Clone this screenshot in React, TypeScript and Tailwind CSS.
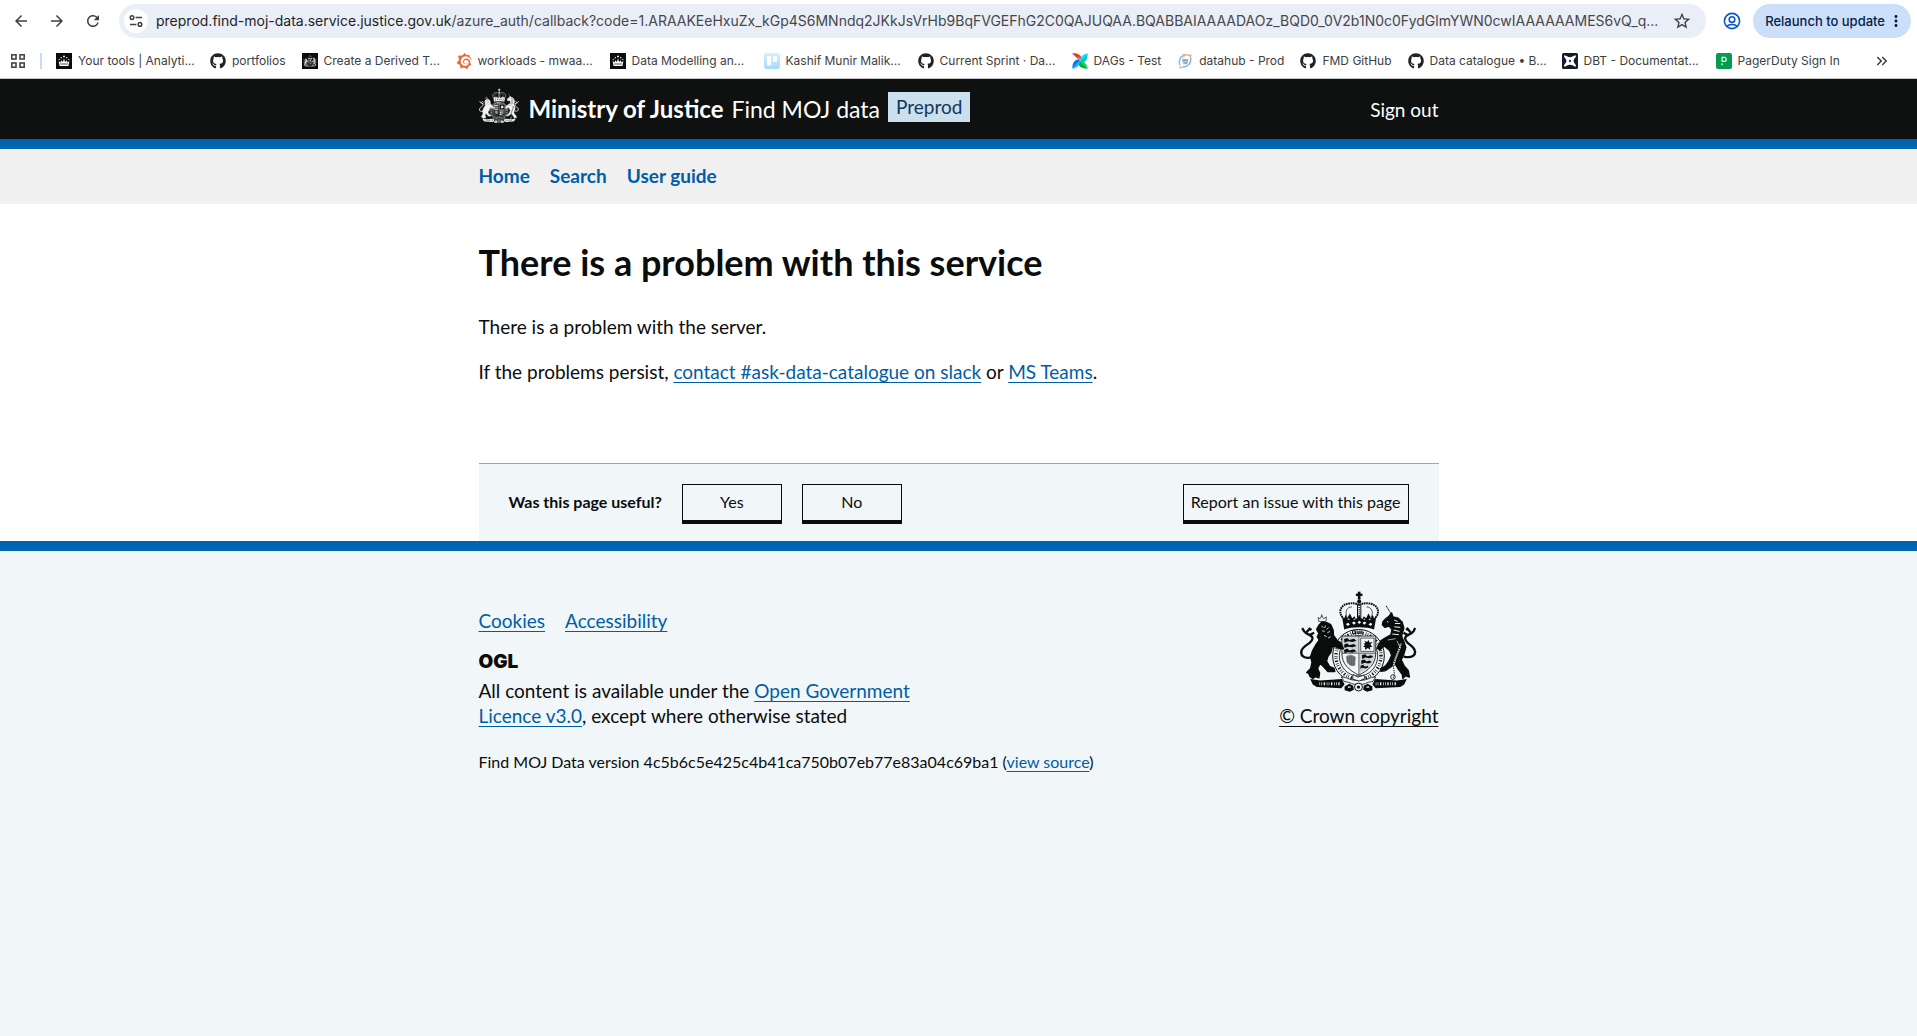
import React from "react";
import { FaGithub } from "react-icons/fa";
import { SiGrafana } from "react-icons/si";
import {
  MdArrowBack,
  MdArrowForward,
  MdRefresh,
  MdStarBorder,
  MdMoreVert,
  MdKeyboardDoubleArrowRight,
} from "react-icons/md";

const LION =
  "M66 112 L74 104 L88 106 L100 112 L107 128 L108 144 L118 158 L132 170 L138 184 L126 183 L110 176 L104 180 L100 196 L91 208 L87 222 L96 238 L110 244 L112 253 L92 253 L78 238 L68 228 L60 244 L66 258 L64 272 L54 268 L46 274 L38 268 L34 258 L28 256 L40 244 L44 226 L40 208 L46 190 L56 172 L66 158 L60 148 L65 138 L58 126 Z";
const UNICORN =
  "M258 102 L268 92 L276 86 L284 76 L288 88 L304 92 L316 104 L321 122 L314 146 L320 160 L327 180 L320 204 L313 218 L322 236 L334 250 L338 270 L326 266 L318 274 L316 262 L304 246 L296 232 L284 238 L266 250 L252 253 L250 246 L266 236 L276 222 L284 204 L278 190 L262 176 L248 188 L240 182 L252 160 L268 150 L282 142 L285 126 L276 116 L264 120 L256 112 Z";
const LION_TAIL =
  "M44 210 C20 216 8 206 12 190 C16 174 46 168 45 152 C44 140 28 144 20 132 L14 122 M24 138 L36 124 L42 128 M34 144 L50 136";
const UNICORN_TAIL =
  "M320 208 C346 214 358 204 354 190 C350 174 324 168 325 152 C326 140 342 144 350 132 L355 122 M344 138 L332 124 L328 128 M334 144 L320 136";

function RoyalArms({ ink, paper, className }: { ink: string; paper: string; className: string }) {
  return (
    <svg viewBox="8 10 352 308" className={className} aria-hidden="true" fill={ink}>
      {/* garter and shield */}
      <ellipse cx="184" cy="206" rx="78" ry="80" fill={paper} stroke={ink} strokeWidth="3" />
      <ellipse cx="184" cy="206" rx="68" ry="70" fill="none" stroke={ink} strokeWidth="10" strokeDasharray="2 4 2 5 4 6" />
      <ellipse cx="184" cy="206" rx="58" ry="61" fill={paper} stroke={ink} strokeWidth="2.5" />
      <path d="M134 146 H236 V200 C236 230 214 250 185 264 C156 250 134 230 134 200 Z" fill={paper} stroke={ink} strokeWidth="2.5" />
      <path d="M136 148 H184 V197 H136 Z M185 199 H234 C234 228 214 246 185 260 Z" opacity="0.15" />
      <path d="M140 156 l10 -4 l6 6 l14 -4 l8 6 l-12 4 l-14 -2 l-10 4 Z M140 172 l10 -4 l6 6 l14 -4 l8 6 l-12 4 l-14 -2 l-10 4 Z M140 188 l10 -4 l6 6 l14 -4 l8 6 l-12 4 l-14 -2 l-10 4 Z" />
      <path d="M194 204 l10 -3 l6 6 l12 -3 l7 5 l-12 4 l-12 -2 l-10 4 Z M192 220 l10 -3 l6 6 l10 -3 l6 5 l-10 4 l-12 -2 l-9 4 Z M190 236 l8 -3 l6 6 l8 -3 l2 5 l-8 3 l-12 -2 l-4 4 Z" />
      <rect x="191" y="152" width="40" height="40" fill={paper} stroke={ink} strokeWidth="2" />
      <path d="M202 160 l8 4 l4 -6 l4 8 l8 -2 l-6 8 l6 6 l-8 2 l2 8 l-8 -6 l-8 6 l0 -8 l-6 -2 l6 -5 l-5 -4 l6 -2 Z" />
      <path d="M146 208 C154 200 168 200 176 210 L174 234 C166 240 156 236 148 224 Z" opacity="0.45" />
      <path d="M152 208 V228 M158 206 V234 M164 206 V236 M170 208 V236" stroke={ink} strokeWidth="1.5" />
      <path d="M185 146 V264 M134 198 H236" stroke={ink} strokeWidth="4" opacity="0.45" />
      {/* crown */}
      <rect x="182" y="12" width="8" height="24" />
      <rect x="176" y="18" width="20" height="7" />
      <circle cx="186" cy="42" r="6" />
      <path
        d="M136 90 C120 70 134 50 154 48 C168 46 180 48 186 52 C192 48 204 46 218 48 C238 50 252 70 236 90"
        fill="none"
        stroke={ink}
        strokeWidth="6"
        strokeDasharray="5 2"
      />
      <path d="M150 90 C142 74 148 58 164 58 M222 90 C230 74 224 58 208 58" fill="none" stroke={ink} strokeWidth="2" />
      <path d="M181 50 V92 M191 50 V92" stroke={ink} strokeWidth="3" />
      <path d="M186 52 V92" stroke={ink} strokeWidth="4" strokeDasharray="3 3" />
      <path d="M134 86 l7 6 l4 -10 l5 10 l8 -14 l7 14 l7 -6 l3 8 l6 -2 l5 -10 l5 10 l6 2 l3 -8 l7 6 l7 -14 l8 14 l5 -10 l4 10 l7 -6 L231 126 C210 117 162 117 141 126 Z" />
      <path
        d="M146 110 l7 -4 l5 5 l-7 5 Z M164 106 l7 -4 l5 5 l-6 5 Z M181 104 l5 -4 l6 4 l-6 6 Z M196 107 l6 -5 l6 4 l-6 6 Z M214 111 l6 -5 l6 4 l-5 6 Z M150 96 l4 -4 l4 5 Z M168 96 l4 -3 l3 4 Z M198 96 l4 -3 l3 4 Z M214 97 l4 -4 l4 4 Z"
        fill={paper}
      />
      <path d="M166 130 h8 v9 h-8 Z M180 129 v9 h8 v-9 M194 129 v11" fill="none" stroke={ink} strokeWidth="3" />
      {/* lion */}
      <path d="M64 102 L62 90 L68 94 L73 84 L79 94 L87 88 L86 102 Z M73 80 v8" fill="none" stroke={ink} strokeWidth="2" />
      <path d={LION} stroke={ink} strokeWidth="5" strokeLinejoin="round" />
      <path d={LION_TAIL} fill="none" stroke={ink} strokeWidth="7" />
      <path d="M72 116 l6 4 M84 114 l-2 8 M94 120 l-6 6 M74 130 l8 2 M90 136 l8 -4 M80 144 l8 4 M100 148 l-8 4" stroke={paper} strokeWidth="2.5" />
      {/* unicorn */}
      <path d="M283 80 L267 54" stroke={ink} strokeWidth="3" strokeDasharray="4 1" />
      <path d={UNICORN} stroke={ink} strokeWidth="4" strokeLinejoin="round" />
      <path d={UNICORN_TAIL} fill="none" stroke={ink} strokeWidth="7" />
      <path d="M292 98 l10 4 M294 108 l16 0 M292 118 l18 2 M290 128 l18 4 M286 140 l20 2 M270 102 l4 2" stroke={paper} strokeWidth="3" />
      <path d="M272 158 l24 -4 M300 160 l10 22" stroke={paper} strokeWidth="2" />
      <path d="M312 168 C306 200 290 214 290 240 C290 252 296 262 288 274" fill="none" stroke={paper} strokeWidth="5" />
      <path d="M312 168 C306 200 290 214 290 240 C290 252 296 262 288 274" fill="none" stroke={ink} strokeWidth="3" strokeDasharray="4 3" />
      <circle cx="288" cy="270" r="7" fill="none" stroke={ink} strokeWidth="2.5" />
      {/* scroll */}
      <path d="M38 276 L68 280 L134 276 L142 292 L132 304 L58 300 L46 292 Z M330 276 L300 280 L234 276 L226 292 L236 304 L310 300 L322 292 Z" />
      <path d="M66 290 L132 290 M236 290 L302 290" stroke={paper} strokeWidth="9" strokeDasharray="2 4 2 5 4 5" />
      <path d="M132 270 C150 268 160 284 184 278 C208 284 218 268 236 270 L226 284 C206 284 204 296 184 290 C164 296 162 284 142 284 Z" fill={paper} stroke={ink} strokeWidth="2.5" />
      <path d="M168 262 l14 8 l18 -6 l4 10 l-18 8 l-20 -6 Z" fill={paper} stroke={ink} strokeWidth="2.5" />
      <path d="M142 298 l14 -8 l12 6 l2 12 l-12 6 l-16 -4 Z M226 298 l-14 -8 l-12 6 l-2 12 l12 6 l16 -4 Z" />
      <circle cx="184" cy="300" r="12" fill={paper} stroke={ink} strokeWidth="3" />
      <circle cx="184" cy="300" r="5" />
      <path d="M152 300 h8 M208 300 h8" stroke={paper} strokeWidth="4" />
    </svg>
  );
}

function CrownIcon() {
  return (
    <svg viewBox="0 0 16 16" className="size-4" aria-hidden="true">
      <rect width="16" height="16" fill="#0b0c0c" />
      <g fill="#fff">
        <path d="M7.5 2.4 h1 v2 h-1 Z M7 2.9 h2 v0.8 h-2 Z" />
        <circle cx="5.2" cy="4.8" r="0.7" />
        <circle cx="10.8" cy="4.8" r="0.7" />
        <circle cx="3.2" cy="6.6" r="0.7" />
        <circle cx="12.8" cy="6.6" r="0.7" />
        <path d="M2.6 8 L4.6 9.4 L5.2 7.2 L6.9 8.9 L8 5.4 L9.1 8.9 L10.8 7.2 L11.4 9.4 L13.4 8 L12.4 13 H3.6 Z" />
      </g>
      <path d="M4.2 11 h7.6" stroke="#0b0c0c" strokeWidth="0.7" />
    </svg>
  );
}

function ArmsIcon() {
  return (
    <span className="flex size-4 items-center justify-center bg-[#0b0c0c]">
      <RoyalArms ink="#d6d6d6" paper="#0b0c0c" className="h-3 w-3.5" />
    </span>
  );
}

function TrelloIcon() {
  return (
    <svg viewBox="0 0 16 16" className="size-4" aria-hidden="true">
      <defs>
        <linearGradient id="board" x1="0" y1="0" x2="0" y2="1">
          <stop offset="0" stopColor="#d3f1fd" />
          <stop offset="1" stopColor="#a5daf5" />
        </linearGradient>
      </defs>
      <rect width="16" height="16" rx="3" fill="url(#board)" />
      <rect x="3" y="3" width="4.2" height="9.4" rx="1" fill="#fff" />
      <rect x="8.8" y="3" width="4.2" height="6" rx="1" fill="#fff" />
    </svg>
  );
}

function AirflowIcon() {
  return (
    <svg viewBox="0 0 16 16" className="size-4" aria-hidden="true">
      <path d="M8 8 L0.2 0.4 C5 0 9.4 2 9.6 6 Z" fill="#e43921" />
      <path d="M8 8 L4.4 3.6 L9.4 5 Z" fill="#ff7557" />
      <path d="M8 8 L15.6 0.2 C16 5 14 9.4 10 9.6 Z" fill="#00c7d4" />
      <path d="M8 8 C8 4 11 1 15.6 0.2 L10.6 6.6 Z" fill="#11e1ee" />
      <path d="M8 8 L15.8 15.6 C11 16 6.6 14 6.4 10 Z" fill="#00ad46" />
      <path d="M8 8 C12 8 15 11 15.8 15.6 Z" fill="#04d659" />
      <path d="M8 8 L0.4 15.8 C0 11 2 6.6 6 6.4 Z" fill="#017cee" />
      <path d="M8 8 C8 12 5 15 0.4 15.8 Z" fill="#0cb6ff" />
    </svg>
  );
}

function DatahubIcon() {
  return (
    <svg viewBox="0 0 16 16" className="size-4" aria-hidden="true" fill="none">
      <path d="M3 12.5 C1 8 3 3 8 2.4" stroke="#8fc1ea" strokeWidth="1.6" />
      <path d="M5.6 1.6 L13.8 2.4 L13 5" stroke="#f0a080" strokeWidth="1.4" />
      <path d="M13.6 5 C14.6 10 11 14 6 14" stroke="#7fb4e4" strokeWidth="1.4" />
      <path d="M2 14.8 L6.4 14" stroke="#f3b36b" strokeWidth="1.4" />
      <path d="M4.6 5.4 L11.6 6 L10.6 11.6 L6 11.2 Z" fill="#c8cdd2" />
      <path d="M5.6 7.2 h5 M6.6 9.2 l2.2 1.4 l1.4 -1.8" stroke="#7a838c" />
    </svg>
  );
}

function DbtIcon() {
  return (
    <svg viewBox="0 0 16 16" className="size-4" aria-hidden="true">
      <rect width="16" height="16" rx="1.5" fill="#141c2b" />
      <path d="M2 2.6 C4 2 5.4 4.2 8 4.2 S12 2 14 2.6 C14.4 4.6 11.6 5.6 11.6 8 S14.4 11.4 14 13.4 C12 14 10.6 11.8 8 11.8 S4 14 2 13.4 C1.6 11.4 4.4 10.4 4.4 8 S1.6 4.6 2 2.6 Z" fill="#fff" />
      <path d="M8 6.6 L9.4 8 L8 9.4 L6.6 8 Z" fill="#141c2b" />
    </svg>
  );
}

function PagerDutyIcon() {
  return (
    <span className="flex size-4 items-center justify-center rounded-xs bg-[#069c50]">
      <svg viewBox="0 0 8 12" className="h-2.5 w-2" aria-hidden="true" fill="none" stroke="#fff" strokeWidth="1.4">
        <path d="M1.7 7 V1.7 H4.6 C7.4 1.7 7.4 6.4 4.6 6.4 H1.7 M1.7 8.6 V11" />
      </svg>
    </span>
  );
}

function ProfileIcon() {
  return (
    <svg viewBox="0 0 18 18" className="size-[18px]" aria-hidden="true" fill="none" stroke="#0b57d0" strokeWidth="1.6">
      <circle cx="9" cy="9" r="7.6" />
      <circle cx="9" cy="7.6" r="2.8" />
      <path d="M4 14.4 C5.6 11.8 12.4 11.8 14 14.4" />
    </svg>
  );
}

function SiteControlsIcon() {
  return (
    <svg viewBox="0 0 14 14" className="size-3.5" aria-hidden="true" fill="none" stroke="#3c4043" strokeWidth="1.5">
      <circle cx="3" cy="3.6" r="1.8" />
      <path d="M6.6 3.6 H13 M1 10.4 H7.4" />
      <circle cx="11" cy="10.4" r="1.8" />
    </svg>
  );
}

function AppsIcon() {
  return (
    <svg viewBox="0 0 14 14" className="size-3.5" aria-hidden="true" fill="none" stroke="#474747" strokeWidth="1.6">
      <rect x="0.8" y="0.8" width="4.2" height="4.2" />
      <rect x="9" y="0.8" width="4.2" height="4.2" />
      <rect x="0.8" y="9" width="4.2" height="4.2" />
      <rect x="9" y="9" width="4.2" height="4.2" />
    </svg>
  );
}

const github = <FaGithub className="size-4 text-[#1f2328]" />;

const bookmarks = [
  { icon: <CrownIcon />, label: "Your tools | Analyti...", clipped: true },
  { icon: github, label: "portfolios" },
  { icon: <ArmsIcon />, label: "Create a Derived T...", clipped: true },
  { icon: <SiGrafana className="size-4 text-[#f2673a]" />, label: "workloads - mwaa...", clipped: true },
  { icon: <CrownIcon />, label: "Data Modelling an...", clipped: true },
  { icon: <TrelloIcon />, label: "Kashif Munir Malik...", clipped: true },
  { icon: github, label: "Current Sprint · Da...", clipped: true },
  { icon: <AirflowIcon />, label: "DAGs - Test" },
  { icon: <DatahubIcon />, label: "datahub - Prod" },
  { icon: github, label: "FMD GitHub" },
  { icon: github, label: "Data catalogue • B...", clipped: true },
  { icon: <DbtIcon />, label: "DBT - Documentat...", clipped: true },
  { icon: <PagerDutyIcon />, label: "PagerDuty Sign In" },
];

function BrowserBar() {
  return (
    <div className="border-b border-[#c7c7c7] bg-white font-['Inter',sans-serif] text-[#3c4043]">
      <div className="flex items-center pt-1 pr-1.5 pl-[11px]">
        <div className="flex gap-4">
          <button aria-label="Back" className="flex size-5 items-center justify-center">
            <MdArrowBack className="size-[18px]" />
          </button>
          <button aria-label="Forward" className="flex size-5 items-center justify-center">
            <MdArrowForward className="size-[18px]" />
          </button>
          <button aria-label="Reload" className="flex size-5 items-center justify-center">
            <MdRefresh className="size-[18px]" />
          </button>
        </div>
        <div className="ml-4 flex h-[34px] min-w-0 flex-1 items-center rounded-full bg-[#e9eef8] pr-3.5 pl-[5px]">
          <button aria-label="Site information" className="flex size-6 shrink-0 items-center justify-center rounded-full bg-white">
            <SiteControlsIcon />
          </button>
          <div className="ml-2 flex-1 truncate text-[14px] leading-5 text-[#474747]">
            <span className="text-[#1f1f1f]">preprod.find-moj-data.service.justice.gov.uk</span>
            /azure_auth/callback?code=1.ARAAKEeHxuZx_kGp4S6MNndq2JKkJsVrHb9BqFVGEFhG2C0QAJUQAA.BQABBAIAAAADAOz_BQD0_0V2b1N0c0FydGlmYWN0cwIAAAAAAMES6vQ_q...
          </div>
          <button aria-label="Bookmark this page" className="shrink-0">
            <MdStarBorder className="size-5" />
          </button>
        </div>
        <button aria-label="Profile" className="mr-3 ml-[17px]">
          <ProfileIcon />
        </button>
        <button className="flex h-[34px] items-center gap-0.5 rounded-full bg-[#cbdffb] pr-1.5 pl-3 text-[13px] font-medium text-[#041e49]">
          Relaunch to update
          <MdMoreVert className="size-[18px]" />
        </button>
      </div>
      <div className="flex h-10 items-center pt-1.5 pr-[26px] pl-[11px] text-[12px] leading-4">
        <button aria-label="Apps">
          <AppsIcon />
        </button>
        <span className="mr-[14px] ml-[15px] h-4 w-0.5 bg-[#c7dcfa]" />
        <nav aria-label="Bookmarks" className="flex min-w-0 flex-1 gap-4 overflow-hidden">
          {bookmarks.map((b) => (
            <a key={b.label} href="#" className="flex shrink-0 items-center gap-1.5">
              {b.icon}
              <span className={b.clipped ? "w-[116px] whitespace-nowrap" : "whitespace-nowrap"}>{b.label}</span>
            </a>
          ))}
        </nav>
        <button aria-label="More bookmarks">
          <MdKeyboardDoubleArrowRight className="size-[18px]" />
        </button>
      </div>
    </div>
  );
}

const link = "text-[#005da5] underline decoration-1 underline-offset-[3px]";
const container = "mx-auto w-full max-w-[960px]";
const feedbackButton =
  "h-10 border border-b-4 border-[#0b0c0c] pb-0.5 text-[16px] leading-5 whitespace-nowrap";

export default function App() {
  return (
    <div className="flex min-h-screen flex-col bg-white font-['Lato',sans-serif] text-[19px] leading-[25px] text-[#0b0c0c]">
      <BrowserBar />
      <header className="border-b-10 border-[#0065af] bg-[#0e1110] text-white">
        <div className={`${container} flex h-[60px] items-center justify-between`}>
          <div className="flex items-center">
            <a href="#" className="flex items-center gap-2.5 text-[24px] leading-[30px] font-bold">
              <RoyalArms ink="#f2f2f2" paper="#0e1110" className="mb-1.5 h-9 w-10" />
              Ministry of Justice
            </a>
            <a href="#" className="ml-2 text-[23px] leading-[30px]">
              Find MOJ data
            </a>
            <strong className="mb-1 ml-2 bg-[#ccdfed] px-2 pt-0.5 pb-[3px] leading-[25px] font-normal text-[#0f385c]">
              Preprod
            </strong>
          </div>
          <a href="#">Sign out</a>
        </div>
      </header>

      <nav aria-label="Main" className="bg-[#f0f0f0]">
        <ul className={`${container} flex gap-5 pt-[14px] pb-4 font-bold text-[#005da5]`}>
          <li><a href="#">Home</a></li>
          <li><a href="#">Search</a></li>
          <li><a href="#">User guide</a></li>
        </ul>
      </nav>

      <main className={container}>
        <h1 className="mt-[38px] text-[36px] leading-10 font-bold">There is a problem with this service</h1>
        <p className="mt-8">There is a problem with the server.</p>
        <p className="mt-5">
          If the problems persist, <a href="#" className={link}>contact #ask-data-catalogue on slack</a> or{" "}
          <a href="#" className={link}>MS Teams</a>.
        </p>
        <section className="mt-[79px] flex items-start justify-between border-t border-[#7db0d7] bg-[#f1f6f9] px-[30px] pt-5 pb-[17px]">
          <div className="flex items-center gap-5">
            <h2 className="pb-1 text-[16px] leading-5 font-bold">Was this page useful?</h2>
            <button className={`${feedbackButton} w-[100px]`}>Yes</button>
            <button className={`${feedbackButton} w-[100px]`}>No</button>
          </div>
          <button className={`${feedbackButton} px-[7px]`}>Report an issue with this page</button>
        </section>
      </main>

      <footer className="flex-1 border-t-10 border-[#0065af] bg-[#f1f6f9]">
        <div className={container}>
          <div className="flex items-end justify-between pt-10">
            <div className="max-w-[440px]">
              <ul className="flex gap-5">
                <li><a href="#" className={link}>Cookies</a></li>
                <li><a href="#" className={link}>Accessibility</a></li>
              </ul>
              <div className="mt-4 font-['Inter',sans-serif] font-black">OGL</div>
              <p className="mt-1">
                All content is available under the <a href="#" className={link}>Open Government Licence v3.0</a>, except
                where otherwise stated
              </p>
            </div>
            <a href="#" className="flex flex-col items-center gap-2.5 underline decoration-1 underline-offset-[3px]">
              <RoyalArms ink="#0b0c0c" paper="#f1f6f9" className="h-[102px] w-[117px]" />
              © Crown copyright
            </a>
          </div>
          <p className="mt-[22px] text-[16px] leading-6">
            Find MOJ Data version 4c5b6c5e425c4b41ca750b07eb77e83a04c69ba1 (<a href="#" className={link}>view source</a>)
          </p>
        </div>
      </footer>
    </div>
  );
}
